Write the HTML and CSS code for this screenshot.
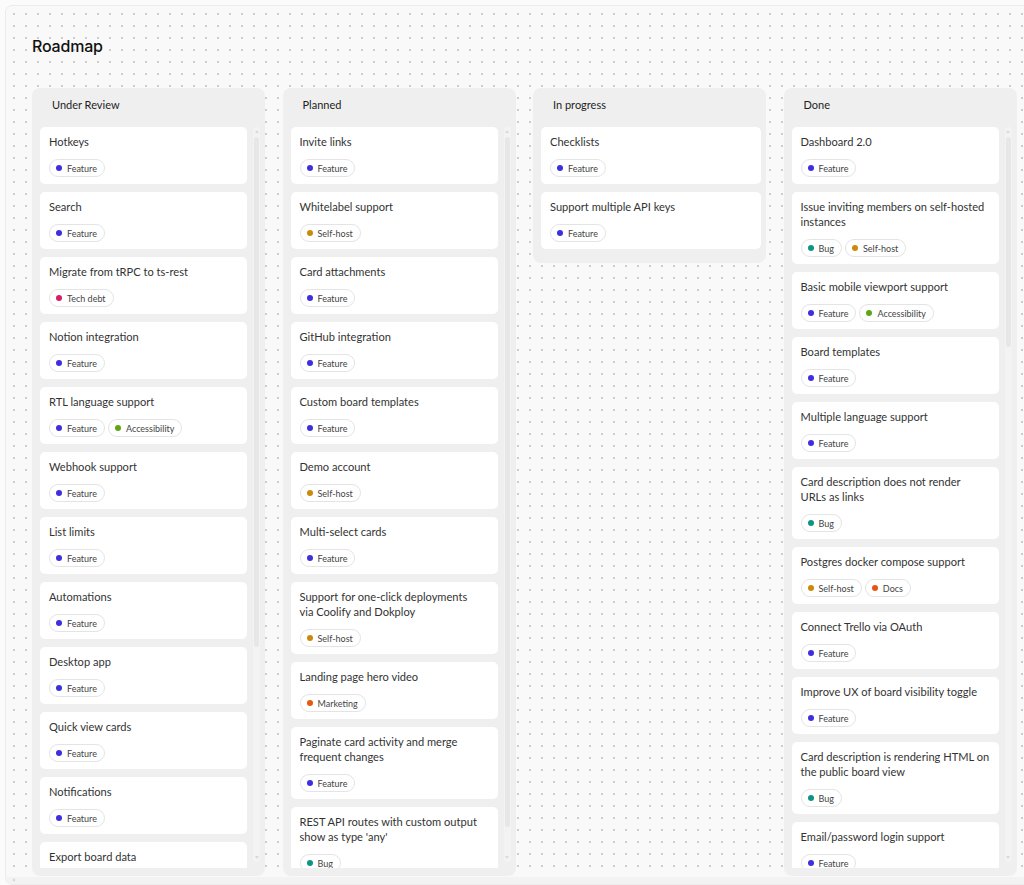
FILE: index.html
```html
<!DOCTYPE html>
<html lang="en">
<head>
  <meta charset="UTF-8" />
  <meta name="viewport" content="width=device-width, initial-scale=1.0"/>
  <title>Roadmap</title>
  <link rel="stylesheet" href="styles.css">
</head>
<body>

  <div class="frame">
    <h1>Roadmap</h1>

    <div class="board">

      <div class="column">
        <div class="column-title">Under Review</div>
        <div class="column-body">
          <div class="cards">
            <div class="card"><div class="card-title">Hotkeys</div><div class="tags"><span class="tag"><i class="dot feature"></i>Feature</span></div></div>
            <div class="card"><div class="card-title">Search</div><div class="tags"><span class="tag"><i class="dot feature"></i>Feature</span></div></div>
            <div class="card"><div class="card-title">Migrate from tRPC to ts-rest</div><div class="tags"><span class="tag"><i class="dot techdebt"></i>Tech debt</span></div></div>
            <div class="card"><div class="card-title">Notion integration</div><div class="tags"><span class="tag"><i class="dot feature"></i>Feature</span></div></div>
            <div class="card"><div class="card-title">RTL language support</div><div class="tags"><span class="tag"><i class="dot feature"></i>Feature</span><span class="tag"><i class="dot a11y"></i>Accessibility</span></div></div>
            <div class="card"><div class="card-title">Webhook support</div><div class="tags"><span class="tag"><i class="dot feature"></i>Feature</span></div></div>
            <div class="card"><div class="card-title">List limits</div><div class="tags"><span class="tag"><i class="dot feature"></i>Feature</span></div></div>
            <div class="card"><div class="card-title">Automations</div><div class="tags"><span class="tag"><i class="dot feature"></i>Feature</span></div></div>
            <div class="card"><div class="card-title">Desktop app</div><div class="tags"><span class="tag"><i class="dot feature"></i>Feature</span></div></div>
            <div class="card"><div class="card-title">Quick view cards</div><div class="tags"><span class="tag"><i class="dot feature"></i>Feature</span></div></div>
            <div class="card"><div class="card-title">Notifications</div><div class="tags"><span class="tag"><i class="dot feature"></i>Feature</span></div></div>
            <div class="card"><div class="card-title">Export board data</div></div>
          </div>
          <div class="scrollbar">
            <span class="arrow up"></span>
            <div class="track"><div class="thumb" style="height: 510px"></div></div>
            <span class="arrow down"></span>
          </div>
        </div>
      </div>

      <div class="column">
        <div class="column-title">Planned</div>
        <div class="column-body">
          <div class="cards">
            <div class="card"><div class="card-title">Invite links</div><div class="tags"><span class="tag"><i class="dot feature"></i>Feature</span></div></div>
            <div class="card"><div class="card-title">Whitelabel support</div><div class="tags"><span class="tag"><i class="dot selfhost"></i>Self-host</span></div></div>
            <div class="card"><div class="card-title">Card attachments</div><div class="tags"><span class="tag"><i class="dot feature"></i>Feature</span></div></div>
            <div class="card"><div class="card-title">GitHub integration</div><div class="tags"><span class="tag"><i class="dot feature"></i>Feature</span></div></div>
            <div class="card"><div class="card-title">Custom board templates</div><div class="tags"><span class="tag"><i class="dot feature"></i>Feature</span></div></div>
            <div class="card"><div class="card-title">Demo account</div><div class="tags"><span class="tag"><i class="dot selfhost"></i>Self-host</span></div></div>
            <div class="card"><div class="card-title">Multi-select cards</div><div class="tags"><span class="tag"><i class="dot feature"></i>Feature</span></div></div>
            <div class="card"><div class="card-title">Support for one-click deployments<br>via Coolify and Dokploy</div><div class="tags"><span class="tag"><i class="dot selfhost"></i>Self-host</span></div></div>
            <div class="card"><div class="card-title">Landing page hero video</div><div class="tags"><span class="tag"><i class="dot marketing"></i>Marketing</span></div></div>
            <div class="card"><div class="card-title">Paginate card activity and merge frequent changes</div><div class="tags"><span class="tag"><i class="dot feature"></i>Feature</span></div></div>
            <div class="card"><div class="card-title">REST API routes with custom output show as type 'any'</div><div class="tags"><span class="tag"><i class="dot bug"></i>Bug</span></div></div>
          </div>
          <div class="scrollbar">
            <span class="arrow up"></span>
            <div class="track"><div class="thumb" style="height: 690px"></div></div>
            <span class="arrow down"></span>
          </div>
        </div>
      </div>

      <div class="column">
        <div class="column-title">In progress</div>
        <div class="column-body">
          <div class="cards">
            <div class="card"><div class="card-title">Checklists</div><div class="tags"><span class="tag"><i class="dot feature"></i>Feature</span></div></div>
            <div class="card"><div class="card-title">Support multiple API keys</div><div class="tags"><span class="tag"><i class="dot feature"></i>Feature</span></div></div>
          </div>
        </div>
      </div>

      <div class="column">
        <div class="column-title">Done</div>
        <div class="column-body">
          <div class="cards">
            <div class="card"><div class="card-title">Dashboard 2.0</div><div class="tags"><span class="tag"><i class="dot feature"></i>Feature</span></div></div>
            <div class="card"><div class="card-title">Issue inviting members on self-hosted instances</div><div class="tags"><span class="tag"><i class="dot bug"></i>Bug</span><span class="tag"><i class="dot selfhost"></i>Self-host</span></div></div>
            <div class="card"><div class="card-title">Basic mobile viewport support</div><div class="tags"><span class="tag"><i class="dot feature"></i>Feature</span><span class="tag"><i class="dot a11y"></i>Accessibility</span></div></div>
            <div class="card"><div class="card-title">Board templates</div><div class="tags"><span class="tag"><i class="dot feature"></i>Feature</span></div></div>
            <div class="card"><div class="card-title">Multiple language support</div><div class="tags"><span class="tag"><i class="dot feature"></i>Feature</span></div></div>
            <div class="card"><div class="card-title">Card description does not render<br>URLs as links</div><div class="tags"><span class="tag"><i class="dot bug"></i>Bug</span></div></div>
            <div class="card"><div class="card-title">Postgres docker compose support</div><div class="tags"><span class="tag"><i class="dot selfhost"></i>Self-host</span><span class="tag"><i class="dot docs"></i>Docs</span></div></div>
            <div class="card"><div class="card-title">Connect Trello via OAuth</div><div class="tags"><span class="tag"><i class="dot feature"></i>Feature</span></div></div>
            <div class="card"><div class="card-title">Improve UX of board visibility toggle</div><div class="tags"><span class="tag"><i class="dot feature"></i>Feature</span></div></div>
            <div class="card"><div class="card-title">Card description is rendering HTML on the public board view</div><div class="tags"><span class="tag"><i class="dot bug"></i>Bug</span></div></div>
            <div class="card"><div class="card-title">Email/password login support</div><div class="tags"><span class="tag"><i class="dot feature"></i>Feature</span></div></div>
          </div>
          <div class="scrollbar">
            <span class="arrow up"></span>
            <div class="track"><div class="thumb" style="height: 210px"></div></div>
            <span class="arrow down"></span>
          </div>
        </div>
      </div>

    </div>

    <div class="hscroll"><span class="hscroll-arrow"></span></div>
  </div>

</body>
</html>
```

FILE: styles.css
```css
* {
  box-sizing: border-box;
  padding: 0;
  margin: 0;
}

body {
  font-family: 'Lato', 'Inter', sans-serif;
  background: #fbfbfb;
  color: #2b2b2b;
  height: 885px;
  overflow: hidden;
}

.frame {
  margin: 5px 0 0 5px;
  width: 1040px;
  height: 880px;
  border: 1px solid #ececec;
  border-radius: 7px;
  background-color: #f9f9f9;
  background-image: radial-gradient(circle, #cdcdcd 0.8px, transparent 1.1px);
  background-size: 12px 12px;
  background-position: 2px 2px;
  display: flex;
  flex-direction: column;
  overflow: hidden;
}

h1 {
  font-family: 'Inter', sans-serif;
  font-size: 16px;
  font-weight: 500;
  color: #111;
  line-height: 20px;
  letter-spacing: -0.2px;
  padding: 30px 0 0 26px;
  height: 82px;
}

.board {
  display: flex;
  align-items: flex-start;
  gap: 17.5px;
  padding-left: 26px;
}

.column {
  width: 233px;
  flex-shrink: 0;
  max-height: 788px;
  background: #efefef;
  border-radius: 8px;
  display: flex;
  flex-direction: column;
  padding-bottom: 8px;
}

.column-title {
  font-size: 11px;
  line-height: 16px;
  color: #1e1e1e;
  padding: 9px 12px 14px 20px;
}

.column-body {
  flex: 1;
  min-height: 0;
  display: flex;
  gap: 6px;
  padding: 0 5px 0 8px;
}

.cards {
  flex: 1;
  min-width: 0;
  overflow: hidden;
  display: flex;
  flex-direction: column;
  gap: 8px;
  padding-bottom: 6px;
}

.card {
  flex-shrink: 0;
  background: #fff;
  border-radius: 5px;
  padding: 7px 9px;
}

.card-title {
  font-size: 11.1px;
  line-height: 15px;
  color: #333;
  margin-bottom: 10px;
}

.tags {
  display: flex;
  gap: 3px;
}

.tag {
  display: inline-flex;
  align-items: center;
  gap: 5px;
  height: 18px;
  padding: 0 7px 0 6px;
  border: 1px solid #e4e4e4;
  border-radius: 9px;
  font-size: 9px;
  color: #444;
  background: #fff;
}

.dot {
  width: 6px;
  height: 6px;
  border-radius: 50%;
}

.dot.feature { background: #3d2ee0; }
.dot.selfhost { background: #cc8a0c; }
.dot.techdebt { background: #d81b6a; }
.dot.a11y { background: #5fa516; }
.dot.bug { background: #0f9384; }
.dot.docs { background: #e8550f; }
.dot.marketing { background: #e35a10; }

/* fake scrollbar so it shows the same in every browser */
.scrollbar {
  width: 7px;
  flex-shrink: 0;
  display: flex;
  flex-direction: column;
  align-items: center;
  background: #f3f3f3;
  border-radius: 4px;
  margin-bottom: 6px;
  padding: 3px 0;
}

.track {
  flex: 1;
  width: 100%;
  padding-top: 4px;
}

.thumb {
  width: 5px;
  margin: 0 auto;
  background: #e7e7e7;
  border-radius: 3px;
}

.arrow {
  width: 0;
  height: 0;
  border-left: 2.5px solid transparent;
  border-right: 2.5px solid transparent;
}

.arrow.up {
  border-bottom: 3px solid #dadada;
}

.arrow.down {
  border-top: 3px solid #dadada;
}

.hscroll {
  margin-top: auto;
  height: 7px;
  background: #f3f3f3;
  position: relative;
}

.hscroll-arrow {
  position: absolute;
  left: 6px;
  top: 1px;
  border-top: 2px solid transparent;
  border-bottom: 2px solid transparent;
  border-right: 3px solid #d8d8d8;
}
```
